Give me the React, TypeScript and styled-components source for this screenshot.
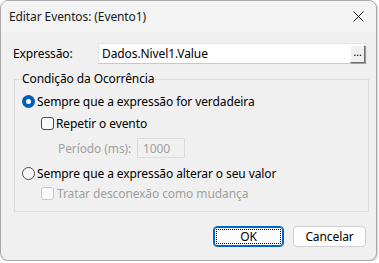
import React from "react";
import styled, { createGlobalStyle } from "styled-components";

const Global = createGlobalStyle`
  html, body { margin: 0; padding: 0; background: #ffffff; }
  body { font-family: "Noto Sans", "Segoe UI", sans-serif; font-size: 12px; letter-spacing: -0.1px; color: #000; }
  * { box-sizing: border-box; }
`;

const Window = styled.div`
  width: 377px;
  height: 261px;
  border: 1px solid #a8a8a8;
  border-radius: 8px;
  background: #f0f0f0;
  overflow: hidden;
  display: flex;
  flex-direction: column;
  box-shadow: 1px 1px 2px rgba(0, 0, 0, 0.18);
`;

const TitleBar = styled.div`
  height: 31px;
  flex: none;
  display: flex;
  align-items: center;
  justify-content: space-between;
  padding: 0 10px 0 8px;
  background: #f3f3f3;
  font-size: 12px;
  color: #1a1a1a;
`;

const CloseBtn = styled.div`
  width: 16px;
  height: 16px;
  display: flex;
  align-items: center;
  justify-content: center;
`;

const Body = styled.div`
  flex: 1;
  display: flex;
  flex-direction: column;
  padding: 11px 9px 0 12px;
`;

const ExprRow = styled.div`
  display: flex;
  align-items: center;
  height: 21px;
`;

const Label = styled.span<{ $w?: number; $disabled?: boolean }>`
  width: ${(p) => (p.$w ? `${p.$w}px` : "auto")};
  flex: none;
  color: ${(p) => (p.$disabled ? "#a0a0a0" : "#000")};
  white-space: nowrap;
`;

const TextBox = styled.div`
  flex: 1;
  height: 21px;
  background: #ffffff;
  border: 1px solid #e3e3e3;
  border-bottom-color: #c8c8c8;
  display: flex;
  align-items: center;
  justify-content: space-between;
  padding-left: 3px;
  padding-right: 1px;
`;

const Ellipsis = styled.div`
  width: 15px;
  height: 18px;
  background: #f0f0f0;
  border: 1px solid;
  border-color: #ffffff #6e6e6e #6e6e6e #ffffff;
  box-shadow: 1px 1px 0 #a0a0a0;
  font-size: 11px;
  line-height: 12px;
  text-align: center;
`;

const Group = styled.fieldset`
  margin: 7px 0 0 1px;
  width: 355px;
  height: 141px;
  border: 1px solid #dcdcdc;
  padding: 0 7px 0 7px;
  display: flex;
  flex-direction: column;
`;

const Legend = styled.legend`
  padding: 0;
  font-size: 12px;
  line-height: 16px;
`;

const OptionRow = styled.div<{ $mt: number; $indent?: number }>`
  display: flex;
  align-items: center;
  height: 20px;
  margin-top: ${(p) => p.$mt}px;
  padding-left: ${(p) => p.$indent ?? 0}px;
`;

const Radio = styled.span<{ $checked?: boolean }>`
  width: 13px;
  height: 13px;
  border-radius: 50%;
  flex: none;
  margin-right: 2px;
  background: ${(p) => (p.$checked ? "#005fb8" : "#fafafa")};
  border: ${(p) => (p.$checked ? "none" : "1px solid #4a4a4a")};
  display: flex;
  align-items: center;
  justify-content: center;
  &::after {
    content: "";
    display: ${(p) => (p.$checked ? "block" : "none")};
    width: 5px;
    height: 5px;
    border-radius: 50%;
    background: #ffffff;
  }
`;

const Check = styled.span<{ $disabled?: boolean }>`
  width: 13px;
  height: 13px;
  flex: none;
  border-radius: 3px;
  margin-right: ${(p) => (p.$disabled ? 3 : 2)}px;
  background: #fafafa;
  border: 1px solid ${(p) => (p.$disabled ? "#c8c8c8" : "#4a4a4a")};
`;

const SmallBox = styled.div`
  width: 48px;
  height: 20px;
  border: 1px solid #dcdcdc;
  background: #f0f0f0;
  color: #a0a0a0;
  display: flex;
  align-items: center;
  padding-left: 5px;
`;

const ButtonRow = styled.div`
  display: flex;
  justify-content: flex-end;
  gap: 9px;
  margin-top: 14px;
  padding-right: 1px;
`;

const Button = styled.button<{ $primary?: boolean }>`
  width: ${(p) => (p.$primary ? 71 : 73)}px;
  height: 21px;
  font-family: inherit;
  font-size: 12px;
  letter-spacing: inherit;
  color: #000;
  background: #fdfdfd;
  border-radius: 4px;
  border: 1px solid ${(p) => (p.$primary ? "#0067c0" : "#d0d0d0")};
  box-shadow: ${(p) => (p.$primary ? "inset 0 0 0 1px #0067c0" : "none")};
  padding: 0;
  display: flex;
  align-items: center;
  justify-content: center;
  position: relative;
  &::after {
    content: "";
    display: ${(p) => (p.$primary ? "block" : "none")};
    position: absolute;
    inset: 2px;
    border: 1px dotted #000;
    border-radius: 1px;
  }
`;

export default function App() {
  return (
    <>
      <Global />
      <Window>
        <TitleBar>
          <span>Editar Eventos: (Evento1)</span>
          <CloseBtn>
            <svg width="11" height="11" viewBox="0 0 11 11">
              <path d="M0.5 0.5 L10.5 10.5 M10.5 0.5 L0.5 10.5" stroke="#1a1a1a" strokeWidth="1" />
            </svg>
          </CloseBtn>
        </TitleBar>
        <Body>
          <ExprRow>
            <Label $w={85}>Expressão:</Label>
            <TextBox>
              <span>Dados.Nivel1.Value</span>
              <Ellipsis>...</Ellipsis>
            </TextBox>
          </ExprRow>
          <Group>
            <Legend>Condição da Ocorrência</Legend>
            <OptionRow $mt={4}>
              <Radio $checked />
              <Label>Sempre que a expressão for verdadeira</Label>
            </OptionRow>
            <OptionRow $mt={2} $indent={19}>
              <Check />
              <Label>Repetir o evento</Label>
            </OptionRow>
            <OptionRow $mt={5} $indent={36}>
              <Label $w={79} $disabled>Período (ms):</Label>
              <SmallBox>1000</SmallBox>
            </OptionRow>
            <OptionRow $mt={5}>
              <Radio />
              <Label>Sempre que a expressão alterar o seu valor</Label>
            </OptionRow>
            <OptionRow $mt={0} $indent={19}>
              <Check $disabled />
              <Label $disabled>Tratar desconexão como mudança</Label>
            </OptionRow>
          </Group>
          <ButtonRow>
            <Button $primary>OK</Button>
            <Button>Cancelar</Button>
          </ButtonRow>
        </Body>
      </Window>
    </>
  );
}
